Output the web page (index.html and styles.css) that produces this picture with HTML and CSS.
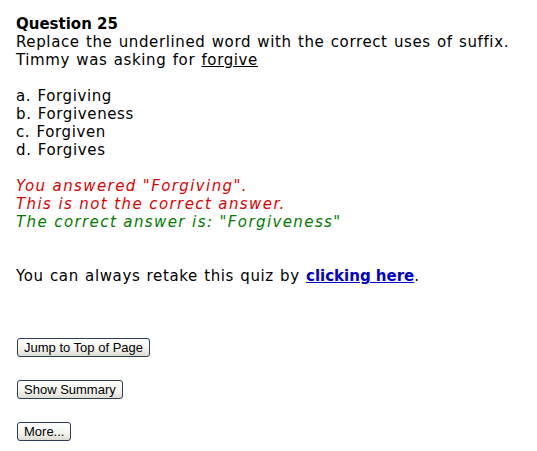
FILE: index.html
```html
<!DOCTYPE html>
<html>
<head>
<meta charset="utf-8">
<title>Quiz Question 25</title>
<link rel="stylesheet" href="styles.css">
</head>
<body>
<div class="quiz">
  <div class="question">
    <div class="q-title">Question 25</div>
    <div class="q-text">Replace the underlined word with the correct uses of suffix.</div>
    <div class="q-text">Timmy was asking for <u>forgive</u></div>
  </div>
  <div class="choices">
    <div>a. Forgiving</div>
    <div>b. Forgiveness</div>
    <div>c. Forgiven</div>
    <div>d. Forgives</div>
  </div>
  <div class="feedback">
    <div class="wrong">You answered "Forgiving".</div>
    <div class="wrong">This is not the correct answer.</div>
    <div class="right">The correct answer is: "Forgiveness"</div>
  </div>
  <div class="retake">You can always retake this quiz by <a href="#" class="link">clicking here</a>.</div>
  <div class="buttons">
    <button class="btn" type="button">Jump to Top of Page</button>
    <button class="btn" type="button">Show Summary</button>
    <button class="btn" type="button">More...</button>
  </div>
</div>
</body>
</html>
```
FILE: styles.css
```css
html, body {
  margin: 0;
  padding: 0;
  background: #ffffff;
}
body {
  font-family: "DejaVu Sans", Verdana, sans-serif;
  font-size: 15px;
  line-height: 18px;
  color: #000;
  letter-spacing: 0.62px;
  word-spacing: 0.9px;
}
.quiz {
  padding: 15px 16px 0 16px;
}
.q-title {
  font-weight: bold;
  letter-spacing: 0;
  word-spacing: 0;
}
.choices {
  margin-top: 18px;
}
.feedback {
  margin-top: 18px;
  font-style: italic;
  letter-spacing: 1.4px;
  word-spacing: 0;
}
.wrong {
  color: #e00000;
}
.right {
  color: #007a00;
}
.retake {
  margin-top: 36px;
}
.link {
  color: #0000cc;
  font-weight: bold;
  text-decoration: underline;
  letter-spacing: 0;
  word-spacing: 0;
}
.buttons {
  display: flex;
  flex-direction: column;
  align-items: flex-start;
  gap: 23px;
  margin-top: 53px;
  padding-left: 1px;
}
.btn {
  font-family: "Liberation Sans", Arial, sans-serif;
  font-size: 13px;
  line-height: 15px;
  letter-spacing: 0;
  word-spacing: 0;
  height: 19px;
  padding: 0 6px;
  margin: 0;
  color: #000;
  border: 1px solid #2c3e5a;
  border-radius: 3px;
  background: linear-gradient(#ffffff, #f4f4ee 60%, #dcdcd3);
}
```
